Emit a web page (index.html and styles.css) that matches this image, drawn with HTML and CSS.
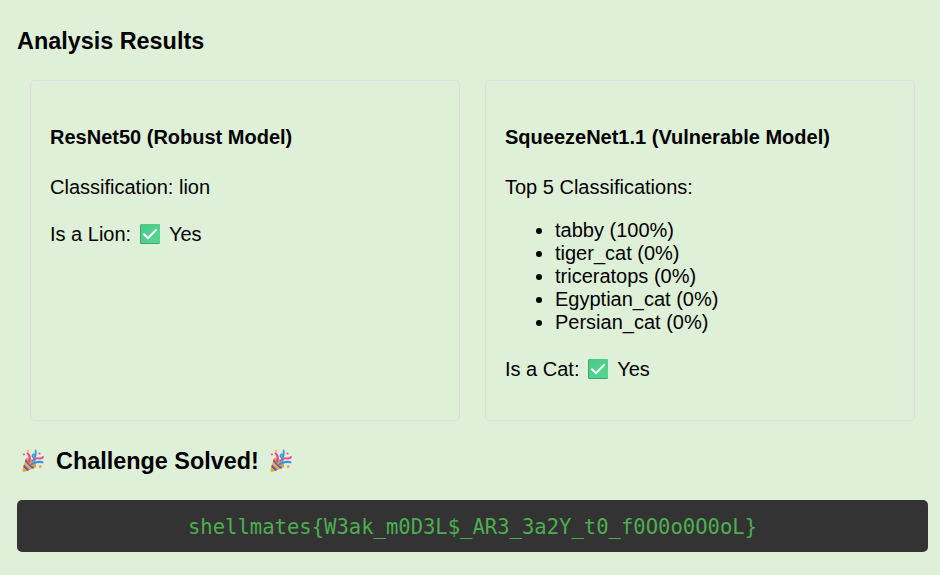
FILE: index.html
```html
<!DOCTYPE html>
<html lang="en">
<head>
<meta charset="utf-8">
<title>Analysis Results</title>
<link rel="stylesheet" href="styles.css">
</head>
<body>
<svg class="defs" width="0" height="0">
  <defs>
    <linearGradient id="green" x1="0" y1="0" x2="1" y2="1"><stop offset="0" stop-color="#4bc98a"/><stop offset="1" stop-color="#54d68f"/></linearGradient>
    <linearGradient id="cone" x1="0" y1="0" x2="1" y2="1"><stop offset="0" stop-color="#f7b83c"/><stop offset="1" stop-color="#e99a35"/></linearGradient>
    <clipPath id="cone-shape"><path d="M5 9 1.3 21Q1 23.4 3.5 23L15 18.3Q14 13 9.5 10Z"/></clipPath>
    <symbol id="check" viewBox="0 0 20 20"><rect width="20" height="20" rx="1.5" fill="#3ca575"/><rect x="1" y="0" width="19" height="19" rx="1.5" fill="url(#green)"/><path d="M4 10.2 8 14.2 16 6" fill="none" stroke="#fff" stroke-width="2" stroke-linecap="round" stroke-linejoin="round"/></symbol>
    <symbol id="party" viewBox="0 0 24 24">
      <g clip-path="url(#cone-shape)">
        <path d="M0 8H17V24H0Z" fill="url(#cone)"/>
        <path d="M3 10 14 21M1 15 9 23" fill="none" stroke="#655dc5" stroke-width="2.3"/>
      </g>
      <ellipse cx="10.3" cy="13.3" rx="2.5" ry="6.2" transform="rotate(-45 10.3 13.3)" fill="#e79a35"/>
      <path d="M8 12.5Q10 8 6.8 4.5" fill="none" stroke="#ee4a94" stroke-width="2.3" stroke-linecap="round"/>
      <path d="M11.5 12Q16 6.5 14.5 1.5M14 5.7C11 4.4 10.6 9 13 8.3" fill="none" stroke="#369ada" stroke-width="1.8" stroke-linecap="round"/>
      <path d="M13.5 11.5Q14.5 8.5 17.3 9.3T22 8" fill="none" stroke="#ee4a94" stroke-width="1.9" stroke-linecap="round"/>
      <path d="M11 15Q16 12 21.5 13.2" fill="none" stroke="#3793e5" stroke-width="2.2" stroke-linecap="round"/>
      <g fill="#e45795"><circle cx="2.9" cy="5.5" r="1.1"/><circle cx="18.5" cy="4.5" r="1.1"/></g>
      <circle cx="7" cy="1.9" r="1.2" fill="#f0bd45"/>
      <circle cx="19.2" cy="17.7" r="1.4" fill="#e99d51"/>
    </symbol>
  </defs>
</svg>
<main class="results">
  <h3 class="title">Analysis Results</h3>
  <div class="models">
    <section class="model">
      <h4>ResNet50 (Robust Model)</h4>
      <p>Classification: lion</p>
      <p>Is a Lion: <svg class="check"><use href="#check"/></svg> Yes</p>
    </section>
    <section class="model">
      <h4>SqueezeNet1.1 (Vulnerable Model)</h4>
      <p>Top 5 Classifications:</p>
      <ul>
        <li>tabby (100%)</li>
        <li>tiger_cat (0%)</li>
        <li>triceratops (0%)</li>
        <li>Egyptian_cat (0%)</li>
        <li>Persian_cat (0%)</li>
      </ul>
      <p>Is a Cat: <svg class="check"><use href="#check"/></svg> Yes</p>
    </section>
  </div>
  <h3 class="solved"><svg class="party"><use href="#party"/></svg><span>Challenge Solved!</span><svg class="party"><use href="#party"/></svg></h3>
  <div class="flag">shellmates{W3ak_m0D3L$_AR3_3a2Y_t0_f0O0o0O0oL}</div>
</main>
</body>
</html>
```
FILE: styles.css
```css
* { box-sizing: border-box; }
body { margin: 0; background: #dff0d8; color: #000; font: 20px/23px "Liberation Sans", Arial, sans-serif; }
.defs { position: absolute; }
.results { padding: 28px 12px 0 17px; }
.title, .solved { margin: 0; font-size: 23.4px; line-height: 27px; }
.models { display: grid; grid-template-columns: 430px 430px; gap: 25px; margin: 25px 0 0 13px; }
.model { height: 341px; padding: 45px 19px 0; border: 1px solid #ddd; border-radius: 5px; }
h4 { margin: 0 0 27px; font-size: 20px; line-height: 23px; }
p { margin: 0 0 24px; }
ul { margin: -4px 0 24px; padding-left: 50px; }
.check { width: 20px; height: 20px; margin: 0 4px 0 3px; vertical-align: -3px; }
.solved { display: flex; align-items: center; margin-top: 27px; }
.party { width: 24px; height: 24px; margin: 0 0 2px 4px; }
.solved span { margin: 0 6px 0 11px; }
.flag { height: 52px; margin-top: 25px; padding-top: 1px; border-radius: 5px; background: #333; color: #4caf50; font: 20.56px/52px "DejaVu Sans Mono", monospace; text-align: center; }
```
